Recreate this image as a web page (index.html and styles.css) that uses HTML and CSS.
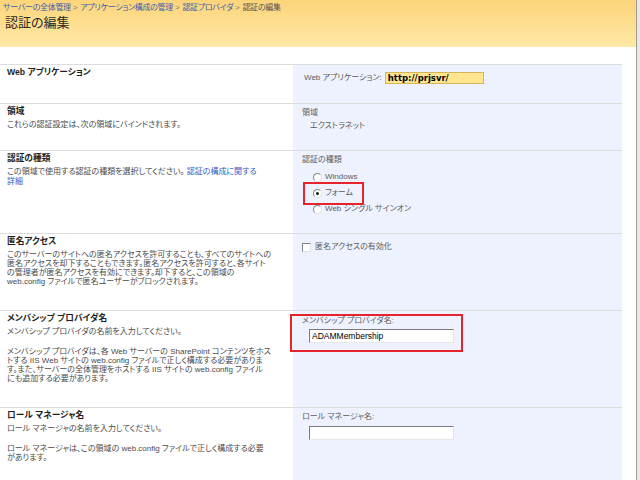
FILE: index.html
```html
<!DOCTYPE html>
<html lang="ja">
<head>
<meta charset="utf-8">
<title>認証の編集</title>
<link rel="stylesheet" href="styles.css">
</head>
<body>
<div class="page">
  <header class="titlebar">
    <nav class="crumbs">
      <a href="#">サーバーの全体管理</a><span class="sep">&gt;</span><a href="#">アプリケーション構成の管理</a><span class="sep">&gt;</span><a href="#">認証プロバイダ</a><span class="sep">&gt;</span><span class="current">認証の編集</span>
    </nav>
    <h1>認証の編集</h1>
  </header>

  <div class="form">
    <section class="row row-app">
      <div class="desc"><h2>Web アプリケーション</h2></div>
      <div class="ctrl ctrl-app">
        <div class="appline"><span class="lbl">Web アプリケーション:</span><span class="appfield">http://prjsvr/</span></div>
      </div>
    </section>

    <section class="row row-zone">
      <div class="desc">
        <h2>領域</h2>
        <p>これらの認証設定は、次の領域にバインドされます。</p>
      </div>
      <div class="ctrl">
        <div class="lbl">領域</div>
        <div class="zone">エクストラネット</div>
      </div>
    </section>

    <section class="row row-type">
      <div class="desc">
        <h2>認証の種類</h2>
        <p class="lh10">この領域で使用する認証の種類を選択してください。 <a href="#">認証の構成に関する<br>詳細</a></p>
      </div>
      <div class="ctrl">
        <div class="lbl">認証の種類</div>
        <ul class="radios">
          <li><span class="radio"></span>Windows</li>
          <li class="hl"><span class="radio checked"></span>フォーム<span class="mark mark-radio"></span></li>
          <li><span class="radio"></span>Web シングル サインオン</li>
        </ul>
      </div>
    </section>

    <section class="row row-anon">
      <div class="desc">
        <h2>匿名アクセス</h2>
        <p>このサーバーのサイトへの匿名アクセスを許可することも、すべてのサイトへの<br>匿名アクセスを却下することもできます。匿名アクセスを許可すると、各サイト<br>の管理者が匿名アクセスを有効にできます。却下すると、この領域の<br>web.config ファイルで匿名ユーザーがブロックされます。</p>
      </div>
      <div class="ctrl ctrl-anon">
        <div class="check"><span class="box"></span>匿名アクセスの有効化</div>
      </div>
    </section>

    <section class="row row-member">
      <div class="desc">
        <h2>メンバシップ プロバイダ名</h2>
        <p>メンバシップ プロバイダの名前を入力してください。</p>
        <p class="para">メンバシップ プロバイダは、各 Web サーバーの SharePoint コンテンツをホス<br>トする IIS Web サイトの web.config ファイルで正しく構成する必要がありま<br>す。また、サーバーの全体管理をホストする IIS サイトの web.config ファイル<br>にも追加する必要があります。</p>
      </div>
      <div class="ctrl ctrl-member">
        <div class="lbl">メンバシップ プロバイダ名:</div>
        <input class="text" type="text" value="ADAMMembership">
        <span class="mark mark-member"></span>
      </div>
    </section>

    <section class="row row-role">
      <div class="desc">
        <h2>ロール マネージャ名</h2>
        <p>ロール マネージャの名前を入力してください。</p>
        <p class="para">ロール マネージャは、この領域の web.config ファイルで正しく構成する必要<br>があります。</p>
      </div>
      <div class="ctrl ctrl-role">
        <div class="lbl">ロール マネージャ名:</div>
        <input class="text" type="text" value="">
      </div>
    </section>
  </div>
</div>
</body>
</html>
```

FILE: styles.css
```css
html {
  background: #ebe8e3;
}
body {
  margin: 0;
  font-family: "Liberation Sans", "Noto Sans CJK JP", sans-serif;
  font-size: 8px;
  line-height: 10px;
  font-feature-settings: "palt";
  color: #4a4a4a;
}
.page {
  width: 636px;
  height: 480px;
  overflow: hidden;
  background: #fff;
  border-right: 1px solid #9e9990;
}
.titlebar {
  height: 47px;
  box-sizing: border-box;
  padding: 2px 3px 0;
  background: linear-gradient(#fcd47a, #fee9a6);
}
.crumbs {
  line-height: 11px;
  font-size: 8px;
  letter-spacing: -0.3px;
  white-space: nowrap;
}
.crumbs a {
  color: #3d5fae;
  text-decoration: none;
}
.crumbs .sep {
  color: #777;
  margin: 0 3px 0 2px;
}
.crumbs .current {
  color: #555;
}
.titlebar h1 {
  margin: 2px 0 0 2px;
  font-size: 13px;
  line-height: 16px;
  font-weight: normal;
  color: #2a2a2a;
}

.form {
  width: 622px;
  margin-top: 17px;
}
.row {
  display: flex;
  border-top: 1px solid #dcdcdc;
}
.row-app { height: 38px; }
.row-zone { height: 46px; }
.row-type { height: 82px; }
.row-anon { height: 76px; }
.row-member { height: 96px; }
.row-role { height: 80px; }

.desc {
  width: 293px;
  flex: none;
  box-sizing: border-box;
  padding: 2px 7px 0;
  white-space: nowrap;
}
.desc h2 {
  margin: 0 0 3px;
  font-size: 8.7px;
  line-height: 11px;
  font-weight: bold;
  color: #1e1e1e;
}
.desc p {
  margin: 0;
  line-height: 9px;
  color: #4a4a4a;
}
.desc p.lh10 {
  line-height: 10px;
}
.desc p.para {
  margin-top: 11px;
}
.desc a {
  color: #2f5ec4;
  text-decoration: none;
}

.ctrl {
  flex: 1;
  position: relative;
  background: #eef2fe;
  padding: 4px 0 0 9px;
  color: #5c5c5c;
  white-space: nowrap;
}
.ctrl-app {
  padding: 7px 0 0 11px;
}
.appline {
  display: flex;
  align-items: center;
}
.appfield {
  margin-left: 3px;
  width: 99px;
  height: 12px;
  box-sizing: border-box;
  padding-left: 2px;
  background: #ffe68f;
  border: 1px solid #d7b45a;
  font-family: "DejaVu Sans", sans-serif;
  font-weight: bold;
  font-size: 8.5px;
  line-height: 10px;
  color: #000;
}
.zone {
  margin: 3px 0 0 8px;
}

.radios {
  list-style: none;
  margin: 4px 0 0 11px;
  padding: 0;
}
.radios li {
  position: relative;
  display: flex;
  align-items: center;
  height: 16px;
}
.radio {
  width: 9px;
  height: 9px;
  box-sizing: border-box;
  margin-right: 3px;
  border-radius: 50%;
  border: 1px solid;
  border-color: #858585 #e2e2e2 #e2e2e2 #858585;
  background: #fff;
  position: relative;
}
.radio.checked::after {
  content: "";
  position: absolute;
  left: 2px;
  top: 2px;
  width: 3px;
  height: 3px;
  border-radius: 50%;
  background: #111;
}
.mark {
  position: absolute;
  box-sizing: border-box;
  border: 2px solid #e5232a;
}
.mark-radio {
  left: -10px;
  top: -3px;
  width: 61px;
  height: 23px;
}

.ctrl-anon {
  padding-top: 8px;
}
.check {
  display: flex;
  align-items: center;
}
.box {
  width: 9px;
  height: 9px;
  box-sizing: border-box;
  margin-right: 4px;
  border: 1px solid;
  border-color: #858585 #e2e2e2 #e2e2e2 #858585;
  background: #fff;
}

.ctrl-member {
  padding-top: 5px;
}
.text {
  display: block;
  width: 145px;
  height: 14px;
  box-sizing: border-box;
  margin: 3px 0 0 7px;
  padding: 0 2px;
  border: 1px solid;
  border-color: #7a7a7a #e6e6e6 #e6e6e6 #7a7a7a;
  background: #fff;
  font-family: "Liberation Sans", sans-serif;
  font-size: 8.5px;
  color: #000;
  outline: none;
}
.mark-member {
  left: -3px;
  top: 3px;
  width: 173px;
  height: 38px;
}
.ctrl-role .text {
  margin-top: 4px;
}
```
